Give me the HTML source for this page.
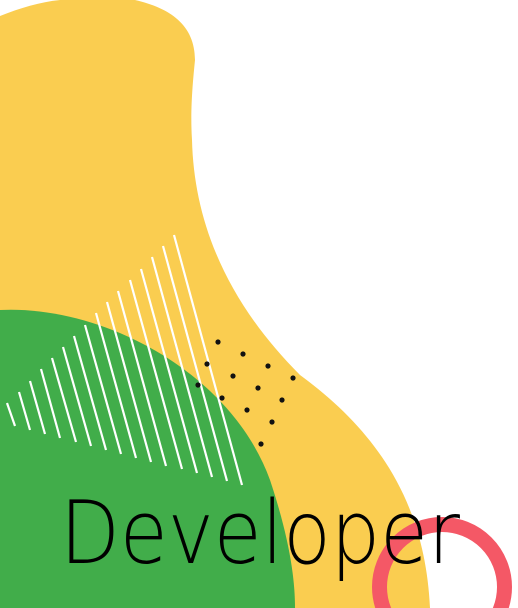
<!DOCTYPE html>
<html><head><meta charset="utf-8"><style>
html,body{margin:0;padding:0;background:#fff;width:518px;height:608px;overflow:hidden}
svg{display:block}
</style></head><body>
<svg width="518" height="608" viewBox="0 0 518 608" xmlns="http://www.w3.org/2000/svg">
<path d="M0,16 C20,8 40,2 60,0 L135,0 C170,8 195,25 195,60 C193,80 190,110 192,140 C194,220 225,300 300,375 C375,430 425,500 430,608 L0,608 Z" fill="#facd50"/>
<path d="M0,310 C100,305 230,370 270,480 C290,540 295,580 295,608 L0,608 Z" fill="#41ad4a"/>
<g stroke="#fff" stroke-width="2.2" stroke-linecap="butt">
<line x1="174" y1="235" x2="242" y2="485"/>
<line x1="163" y1="246" x2="227" y2="481"/>
<line x1="152" y1="257" x2="212" y2="477"/>
<line x1="141" y1="269" x2="197" y2="473"/>
<line x1="130" y1="280" x2="182" y2="469"/>
<line x1="118" y1="291" x2="166" y2="466"/>
<line x1="107" y1="302" x2="151" y2="462"/>
<line x1="96" y1="313" x2="136" y2="458"/>
<line x1="85" y1="325" x2="121" y2="454"/>
<line x1="74" y1="336" x2="106" y2="450"/>
<line x1="63" y1="347" x2="91" y2="446"/>
<line x1="52" y1="358" x2="76" y2="442"/>
<line x1="41" y1="369" x2="60" y2="438"/>
<line x1="30" y1="381" x2="45" y2="434"/>
<line x1="19" y1="392" x2="30" y2="430"/>
<line x1="7" y1="403" x2="15" y2="426"/>
</g>
<g fill="#111">
<circle cx="218" cy="342" r="2.6"/><circle cx="243" cy="354" r="2.6"/><circle cx="268" cy="366" r="2.6"/><circle cx="293" cy="378" r="2.6"/>
<circle cx="207" cy="364" r="2.6"/><circle cx="233" cy="376" r="2.6"/><circle cx="258" cy="388" r="2.6"/><circle cx="282" cy="400" r="2.6"/>
<circle cx="198" cy="385" r="2.6"/><circle cx="222" cy="398" r="2.6"/><circle cx="247" cy="410" r="2.6"/><circle cx="272" cy="422" r="2.6"/>
<circle cx="261" cy="444" r="2.6"/>
</g>
<circle cx="442" cy="587" r="62.5" fill="none" stroke="#f45866" stroke-width="15"/>
<text x="60" y="563" font-family="'DejaVu Sans','Liberation Sans',sans-serif" font-weight="200" font-size="87" textLength="400" lengthAdjust="spacingAndGlyphs" fill="#000">Developer</text>
</svg>
</body></html>
